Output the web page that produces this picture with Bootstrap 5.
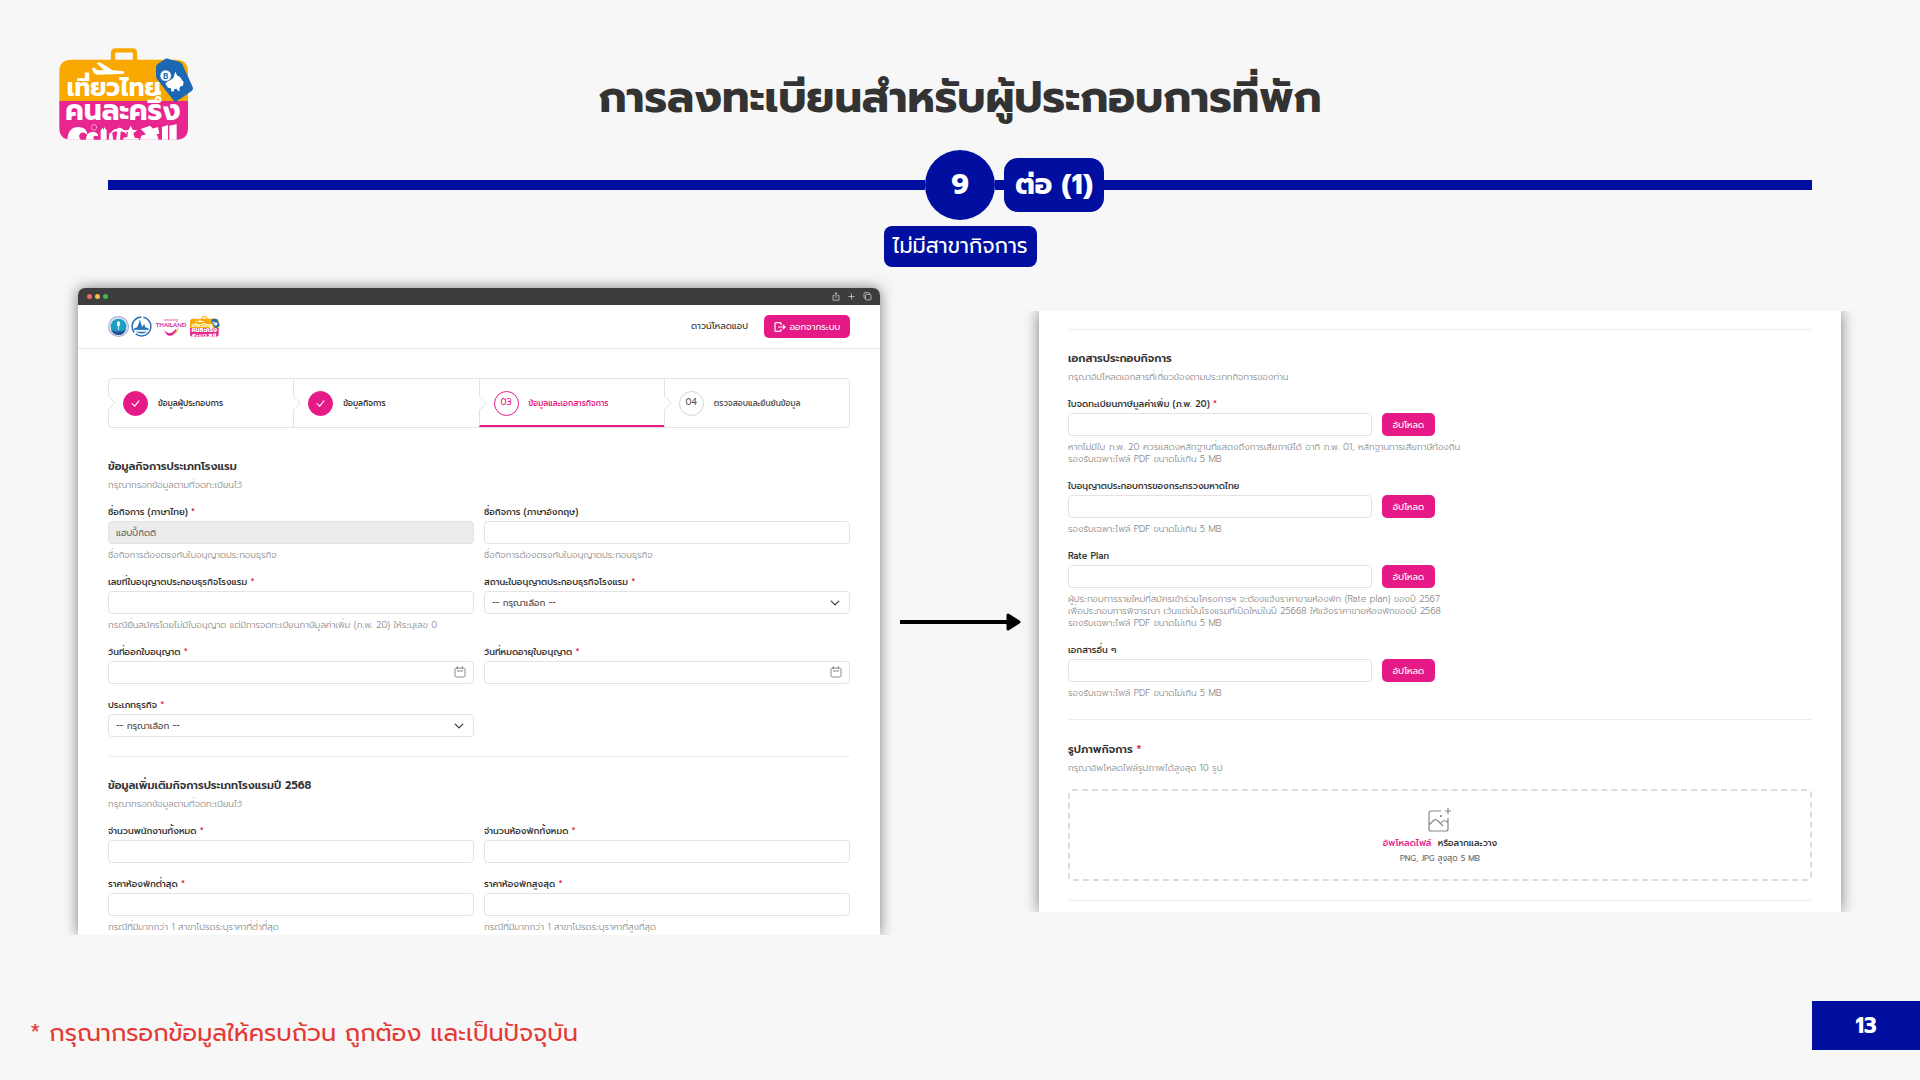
<!DOCTYPE html>
<html lang="th">
<head>
<meta charset="utf-8">
<meta name="viewport" content="width=device-width, initial-scale=1">
<title>การลงทะเบียนสำหรับผู้ประกอบการที่พัก</title>
<link href="https://cdn.jsdelivr.net/npm/bootstrap@5.3.0/dist/css/bootstrap.min.css" rel="stylesheet">
<style>
:root{--navy:#000f9f;--pink:#e61a87;--line:#e3e3e3;--ink:#333;--soft:#8c8c8c}
body{background:#f7f7f7;color:var(--ink);font-family:Prompt,Kanit,"Noto Sans Thai","Noto Sans",sans-serif}
.slide-top{display:grid;grid-template-columns:1fr auto 1fr;padding:47px 59px 0;height:150px}
.slide-top h1{font-size:43px;line-height:60px;font-weight:700;margin:21px 0 0}
.ruler{display:grid;grid-template-columns:1fr auto 1fr;align-items:center;padding:0 108px}
.bar{height:10px;background:var(--navy)}
.bar-gap{width:9px}
.dot{width:70px;height:70px;border-radius:50%;background:var(--navy);color:#fff;font-size:28px}
.part{height:54px;width:100px;border-radius:14px;background:var(--navy);color:#fff;font-size:28px}
.topic{height:41px;padding:0 9px;border-radius:8px;background:var(--navy);color:#fff;font-size:21px;margin-top:6px}
.stage{padding:0 79px 0 78px;margin-top:21px}
.win{background:#fff;flex:1 1 0;min-width:0;box-shadow:0 0 14px rgba(0,0,0,.5)}
.win-a{border-radius:7px 7px 0 0;clip-path:inset(-24px -24px 0 -24px)}
.win-b{clip-path:inset(0 -24px)}
.pane{padding:18px 29px 11px}
.chrome{height:17px;background:#3d3d3d;border-radius:7px 7px 0 0;padding:0 8px 0 9px}
.chrome i{width:5px;height:5px;border-radius:50%}
.lights{gap:3px}
.site{height:44px;border-bottom:1px solid #e4e4e4;padding:0 30px}
.marks{gap:2px}
.site a{font-size:9px;color:var(--ink);text-decoration:none}
.btn-pink{--bs-btn-color:#fff;--bs-btn-bg:var(--pink);--bs-btn-hover-color:#fff;--bs-btn-hover-bg:#c91475;--bs-btn-border-width:0;height:23px;padding:0;border-radius:5px;font-size:9px;line-height:12px;font-weight:400}
.logout{width:86px}
.upload{width:53px}
.sheet{padding:29px 30px 2px}
.steps{border:1px solid var(--line);border-radius:4px;height:50px;margin-bottom:29px}
.step{flex:1 1 0;position:relative;padding-left:14px;gap:10px;font-size:8px;font-weight:500}
.step+.step{border-left:1px solid var(--line)}
.step svg.notch{position:absolute;left:-1px;top:16px}
.step.now{color:var(--pink);border-bottom:2px solid var(--pink);padding-top:2px}
.num{width:25px;height:25px;border-radius:50%;border:1px solid #d5d5d5;font-size:9px;font-weight:400}
.num.done{background:var(--pink);border-color:var(--pink)}
.now .num{border-color:var(--pink)}
.next{color:#555}
h2{font-size:11px;line-height:20px;font-weight:600;margin:0 0 2px}
.hint{font-size:9px;line-height:12px;font-weight:300;color:var(--soft);margin:0}
.fields{display:grid;grid-template-columns:1fr 1fr;gap:15px 10px;margin-top:15px}
.stack{display:grid;gap:15px;margin-top:15px}
.fld label{display:block;font-size:9px;line-height:12px;font-weight:500;margin-bottom:3px;white-space:nowrap}
.fld .hint{margin-top:5px;white-space:nowrap}
.up{gap:10px}
.req{color:#e0293c}
.form-control,.form-select{height:23px;min-height:23px;font-size:9px;line-height:12px;padding:0 7px;border-color:var(--line);border-radius:4px;color:#444}
.form-control:disabled{background:#ececec;color:#666}
.form-select{background-size:10px 10px;background-position:right 9px center}
.cal{position:absolute;right:8px;top:5px}
.rule{border:0;border-top:1px solid #ededed;opacity:1;margin:19px 0}
.rule-mid{margin:20px 0}
.filebox{width:304px;max-width:100%}
.drop{border:2px dashed #dcdcdc;border-radius:4px;height:92px;margin-top:15px;font-size:9px;line-height:12px;cursor:pointer}
.drop b{font-weight:500}
.drop small{font-size:8px;line-height:12px;color:#666;margin-top:3px}
.link{width:159px;padding-top:20px}
.slide-foot{padding:0 0 30px 30px}
.note{font-size:24px;line-height:34px;color:#e53935}
.pg{width:108px;height:49px;background:var(--navy);color:#fff;font-size:22px}
</style>
</head>
<body>
<svg width="0" height="0" class="position-absolute" aria-hidden="true">
  <symbol id="case" viewBox="57 50 405 282">
    <path d="M219 90V68q0-8 8-8h50q8 0 8 8v22" fill="none" stroke="#f9a800" stroke-width="13"/>
    <path d="M58 212V124q0-36 36-36h314q36 0 36 36v88z" fill="#f9a800"/>
    <path d="M58 212h386v80q0 36-36 36H94q-36 0-36-36z" fill="#e8268f"/>
    <path d="M156 113l8-1 8 8h20l-22-22 10-2 38 24 30 2q12 4-2 9l-76 2q-12-4-14-20z" fill="#fff"/>
    <path d="M372 88Q380 82 388 87L418 94Q424 96 427 102L458 170Q461 177 456 181L410 213Q404 216 400 210L351 146Q348 142 348 136V110Q348 104 353 101z" fill="#1c68b2"/>
    <path d="M376 160q4-8 16-12 10-4 10-12l4-12 6 12q10 2 14 14l5 4-2 12-7 2-4 6 1 8-6-1-3-6-8 2-1 7-7-1-1-9-9-2z" fill="#fff"/>
    <circle cx="377" cy="136" r="17" fill="#fff" stroke="#1c68b2" stroke-width="2"/>
    <text x="377" y="145" text-anchor="middle" font-size="24" font-weight="700" fill="#1c68b2" font-family="Inter,sans-serif">B</text>
    <text x="80" y="198" font-size="74" font-weight="700" fill="#fff">เที่ยวไทย</text>
    <text x="76" y="270" font-size="84" font-weight="700" fill="#fff">คนละครึ่ง</text>
    <g fill="#fff">
      <path d="M82 328q2-38 34-38 26 2 26 24-12-12-22-4-6 8 2 18zM138 328q0-22 20-24 18 2 16 14-10-4-14 2l2 8zM182 328v-28l6-8 4 8v-10l8 10v28zM206 328l2-18 8-6 4 24zM228 328l4-24q-10-2-18 6 2-14 16-14 10-8 20 2 12 2 10 14-8-10-18-8l-2 24zM250 328v-6l12-2 2-14-10-6 12-2 6-12 6 12 14 2-12 8 4 14 12 2v4zM300 328l4-12 14-4-16-16 28-10 18 18 8 24zM334 296l20-6 4 20-14 2zM366 328v-38l18-6v44zM388 328v-42l22-4v46z"/>
      <circle cx="162" cy="291" r="8" fill="none" stroke="#fff" stroke-width="3" stroke-dasharray="3 2"/>
    </g>
  </symbol>
  <symbol id="notch" viewBox="0 0 8 16"><path d="M0 0v16" stroke="#fff" stroke-width="3"/><path d="M.5 0v1L7 8 .5 15v1" fill="none" stroke="#e3e3e3"/></symbol>
  <symbol id="tick" viewBox="0 0 10 8"><path d="M1 4l3 3 5-6" fill="none" stroke="#fff" stroke-width="1.2" stroke-linecap="round"/></symbol>
  <symbol id="calendar" viewBox="0 0 12 12"><g fill="none" stroke="#888" stroke-linecap="round"><rect x="1" y="2" width="10" height="9" rx="1.5"/><path d="M3.5.7v2M8.500.7v2M3.300 5h5.400"/></g></symbol>
</svg>

<main class="d-flex flex-column min-vh-100">
  <header class="slide-top">
    <svg width="135" height="94" role="img" aria-label="เที่ยวไทยคนละครึ่ง"><use href="#case"/></svg>
    <h1 class="text-nowrap">การลงทะเบียนสำหรับผู้ประกอบการที่พัก</h1>
  </header>

  <div class="ruler">
    <div class="bar"></div>
    <div class="dot d-flex align-items-center justify-content-center fw-bold">9</div>
    <div class="d-flex align-items-center">
      <div class="bar bar-gap"></div>
      <div class="part d-flex align-items-center justify-content-center fw-bold text-nowrap">ต่อ (1)</div>
      <div class="bar flex-grow-1"></div>
    </div>
  </div>
  <div class="topic d-flex align-items-center align-self-center text-nowrap">ไม่มีสาขากิจการ</div>

  <div class="stage d-flex align-items-center">
    <section class="win win-a">
      <div class="chrome d-flex align-items-center justify-content-between">
        <div class="lights d-flex"><i style="background:#ec6a5e"></i><i style="background:#f4bf4f"></i><i style="background:#3fb950"></i></div>
        <svg width="40" height="9" viewBox="0 0 40 9" fill="none" stroke="#ccc" stroke-width=".8"><path d="M2.500 3.500H1v4.700h6V3.500H5.500M4 6V.8M2.500 2.200L4 .7l1.500 1.500M16.500 4.500h6M19.500 1.500v6"/><rect x="32" y=".6" width="5.500" height="5.500" rx="1"/><rect x="33.500" y="2.400" width="5.500" height="5.500" rx="1" fill="#3d3d3d"/></svg>
      </div>
      <div class="site d-flex align-items-center justify-content-between">
        <div class="marks d-flex align-items-center">
          <svg width="21" height="21" viewBox="0 0 20 20"><circle cx="10" cy="10" r="9.500" fill="#dfe3f3" stroke="#a6aed0"/><circle cx="10" cy="10" r="7.500" fill="#1aa0c8"/><path d="M3 13q7 4 14 0-2 5-7 5t-7-5z" fill="#274a93"/><path d="M10 5v8M9 6h2v3H9z" stroke="#d8f3e4" fill="#fff"/></svg>
          <svg width="21" height="21" viewBox="0 0 20 20"><circle cx="10" cy="10" r="9" fill="#fff" stroke="#2470b5" stroke-width="1.400" stroke-dasharray="20 2"/><path d="M3 12l3-1 2-5 .500-2 .5 2 1.500 5 2-3 1 3 3 1v1H3zM5 15q5 3 10 0" fill="#2470b5" stroke="#2470b5" stroke-width=".4"/></svg>
          <svg width="34" height="21" viewBox="0 0 34 21"><text x="17" y="5" text-anchor="middle" font-size="4" fill="#e6399b" font-family="Lato,sans-serif">amazing</text><text x="17" y="11" text-anchor="middle" font-size="6" font-weight="700" fill="#c02aa0" font-family="Lato,sans-serif">THAILAND</text><path d="M10 14q5 7 12-1 1 4-3 6-6 3-9-5z" fill="#d6249f"/><path d="M18 18q5-2 6-8 1 8-6 8z" fill="#f5a623"/></svg>
          <svg width="30" height="21"><use href="#case"/></svg>
        </div>
        <div class="d-flex align-items-center gap-3">
          <a href="#">ดาวน์โหลดแอป</a>
          <button type="button" class="btn btn-pink logout d-flex align-items-center justify-content-center gap-1"><svg width="12" height="10" viewBox="0 0 12 10" fill="none" stroke="#fff" stroke-width="1.200"><path d="M7 3V1.500Q7 .7 6 .7H2q-1 0-1 .8v7q0 .8 1 .8h4q1 0 1-.8V7M4 5h7M9 3l2 2-2 2"/></svg>ออกจากระบบ</button>
        </div>
      </div>
      <form class="sheet">
        <div class="steps d-flex">
          <div class="step d-flex align-items-center"><svg class="notch" width="8" height="16"><use href="#notch"/></svg><span class="num done d-flex align-items-center justify-content-center"><svg width="9" height="7"><use href="#tick"/></svg></span>ข้อมูลผู้ประกอบการ</div>
          <div class="step d-flex align-items-center"><svg class="notch" width="8" height="16"><use href="#notch"/></svg><span class="num done d-flex align-items-center justify-content-center"><svg width="9" height="7"><use href="#tick"/></svg></span>ข้อมูลกิจการ</div>
          <div class="step now d-flex align-items-center"><svg class="notch" width="8" height="16"><use href="#notch"/></svg><span class="num d-flex align-items-center justify-content-center">03</span>ข้อมูลและเอกสารกิจการ</div>
          <div class="step next d-flex align-items-center"><svg class="notch" width="8" height="16"><use href="#notch"/></svg><span class="num d-flex align-items-center justify-content-center">04</span>ตรวจสอบและยืนยันข้อมูล</div>
        </div>
        <h2>ข้อมูลกิจการประเภทโรงแรม</h2>
        <p class="hint">กรุณากรอกข้อมูลตามที่จดทะเบียนไว้</p>
        <div class="fields">
          <div class="fld"><label for="a1">ชื่อกิจการ (ภาษาไทย) <span class="req">*</span></label><input id="a1" class="form-control" value="แฮปปี้กิตติ" disabled><p class="hint">ชื่อกิจการต้องตรงกับใบอนุญาตประกอบธุรกิจ</p></div>
          <div class="fld"><label for="a2">ชื่อกิจการ (ภาษาอังกฤษ)</label><input id="a2" class="form-control"><p class="hint">ชื่อกิจการต้องตรงกับใบอนุญาตประกอบธุรกิจ</p></div>
          <div class="fld"><label for="a3">เลขที่ใบอนุญาตประกอบธุรกิจโรงแรม <span class="req">*</span></label><input id="a3" class="form-control"><p class="hint">กรณียื่นสมัครโดยไม่มีใบอนุญาต แต่มีการจดทะเบียนภาษีมูลค่าเพิ่ม (ภ.พ. 20) ให้ระบุเลข 0</p></div>
          <div class="fld"><label for="a4">สถานะใบอนุญาตประกอบธุรกิจโรงแรม <span class="req">*</span></label><select id="a4" class="form-select"><option>-- กรุณาเลือก --</option></select></div>
          <div class="fld"><label for="a5">วันที่ออกใบอนุญาต <span class="req">*</span></label><div class="position-relative"><input id="a5" class="form-control"><svg class="cal" width="12" height="12"><use href="#calendar"/></svg></div></div>
          <div class="fld"><label for="a6">วันที่หมดอายุใบอนุญาต <span class="req">*</span></label><div class="position-relative"><input id="a6" class="form-control"><svg class="cal" width="12" height="12"><use href="#calendar"/></svg></div></div>
          <div class="fld"><label for="a7">ประเภทธุรกิจ <span class="req">*</span></label><select id="a7" class="form-select"><option>-- กรุณาเลือก --</option></select></div>
        </div>
        <hr class="rule">
        <h2>ข้อมูลเพิ่มเติมกิจการประเภทโรงแรมปี 2568</h2>
        <p class="hint">กรุณากรอกข้อมูลตามที่จดทะเบียนไว้</p>
        <div class="fields">
          <div class="fld"><label for="a8">จำนวนพนักงานทั้งหมด <span class="req">*</span></label><input id="a8" class="form-control"></div>
          <div class="fld"><label for="a9">จำนวนห้องพักทั้งหมด <span class="req">*</span></label><input id="a9" class="form-control"></div>
          <div class="fld"><label for="a10">ราคาห้องพักต่ำสุด <span class="req">*</span></label><input id="a10" class="form-control"><p class="hint">กรณีที่มีมากกว่า 1 สาขาโปรดระบุราคาที่ต่ำที่สุด</p></div>
          <div class="fld"><label for="a11">ราคาห้องพักสูงสุด <span class="req">*</span></label><input id="a11" class="form-control"><p class="hint">กรณีที่มีมากกว่า 1 สาขาโปรดระบุราคาที่สูงที่สุด</p></div>
        </div>
      </form>
    </section>

    <div class="link flex-shrink-0 text-center"><svg width="122" height="18" viewBox="0 0 122 18"><path d="M1 9h112" stroke="#000" stroke-width="4"/><path d="M109 2l11 7-11 7z" stroke="#000" stroke-width="3" stroke-linejoin="round"/></svg></div>

    <section class="win win-b">
      <form class="pane">
        <hr class="rule mt-0">
        <h2>เอกสารประกอบกิจการ</h2>
        <p class="hint">กรุณาอัปโหลดเอกสารที่เกี่ยวข้องตามประเภทกิจการของท่าน</p>
        <div class="stack">
          <div class="fld"><label for="b1">ใบจดทะเบียนภาษีมูลค่าเพิ่ม (ภ.พ. 20) <span class="req">*</span></label><div class="d-flex up"><input id="b1" class="form-control filebox"><button type="button" class="btn btn-pink upload">อัปโหลด</button></div><p class="hint">หากไม่มีใบ ภ.พ. 20 ควรแสดงหลักฐานที่แสดงถึงการเสียภาษีได้ อาทิ ภ.พ. 01, หลักฐานการเสียภาษีท้องถิ่น<br>รองรับเฉพาะไฟล์ PDF ขนาดไม่เกิน 5 MB</p></div>
          <div class="fld"><label for="b2">ใบอนุญาตประกอบการของกระทรวงมหาดไทย</label><div class="d-flex up"><input id="b2" class="form-control filebox"><button type="button" class="btn btn-pink upload">อัปโหลด</button></div><p class="hint">รองรับเฉพาะไฟล์ PDF ขนาดไม่เกิน 5 MB</p></div>
          <div class="fld"><label for="b3">Rate Plan</label><div class="d-flex up"><input id="b3" class="form-control filebox"><button type="button" class="btn btn-pink upload">อัปโหลด</button></div><p class="hint">ผู้ประกอบการรายใหม่ที่สมัครเข้าร่วมโครงการฯ จะต้องแจ้งราคาขายห้องพัก (Rate plan) ของปี 2567<br>เพื่อประกอบการพิจารณา เว้นแต่เป็นโรงแรมที่เปิดใหม่ในปี 25668 ให้แจ้งราคาขายห้องพักของปี 2568<br>รองรับเฉพาะไฟล์ PDF ขนาดไม่เกิน 5 MB</p></div>
          <div class="fld"><label for="b4">เอกสารอื่น ๆ</label><div class="d-flex up"><input id="b4" class="form-control filebox"><button type="button" class="btn btn-pink upload">อัปโหลด</button></div><p class="hint">รองรับเฉพาะไฟล์ PDF ขนาดไม่เกิน 5 MB</p></div>
        </div>
        <hr class="rule rule-mid">
        <h2>รูปภาพกิจการ <span class="req">*</span></h2>
        <p class="hint">กรุณาอัพโหลดไฟล์รูปภาพได้สูงสุด 10 รูป</p>
        <label class="drop d-flex flex-column align-items-center justify-content-center" for="b5">
          <svg width="24" height="26" viewBox="0 0 24 26" fill="none" stroke="#888" stroke-width="1.200"><path d="M13 4H3Q1 4 1 6v16q0 2 2 2h15q2 0 2-2V11M1 18l5-5q2-1 4 1l5 5M13 16q4-5 7 0M20 1v6M17 4h6"/><circle cx="13" cy="9" r=".5"/></svg>
          <b class="mt-1"><span style="color:var(--pink)">อัพโหลดไฟล์</span>&nbsp; หรือลากและวาง</b>
          <small>PNG, JPG สูงสุด 5 MB</small>
        </label>
        <input id="b5" type="file" class="visually-hidden" multiple>
        <hr class="rule mb-0">
      </form>
    </section>
  </div>

  <footer class="slide-foot d-flex justify-content-between align-items-end mt-auto">
    <div class="note">* กรุณากรอกข้อมูลให้ครบถ้วน ถูกต้อง และเป็นปัจจุบัน</div>
    <div class="pg d-flex align-items-center justify-content-center fw-bold">13</div>
  </footer>
</main>
<script src="https://cdn.jsdelivr.net/npm/bootstrap@5.3.0/dist/js/bootstrap.bundle.min.js"></script>
</body>
</html>
